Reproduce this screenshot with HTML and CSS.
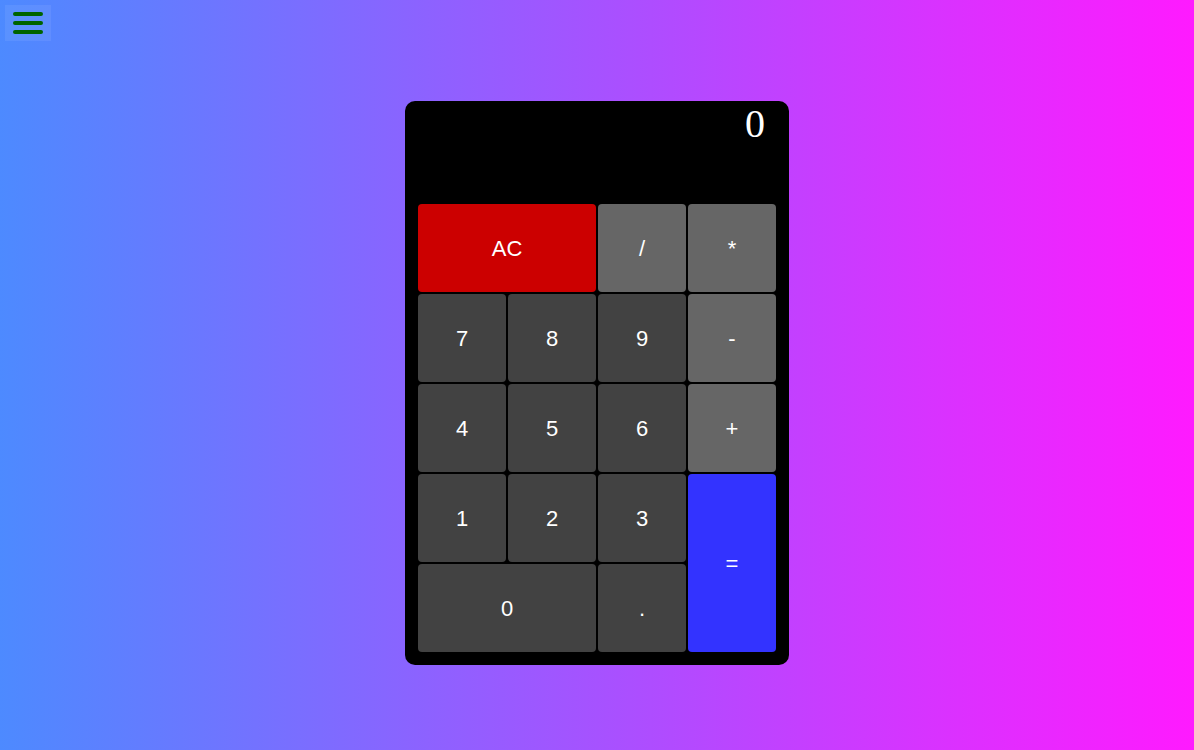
FILE: index.html
```html
<!DOCTYPE html>
<html>
<head>
<meta charset="utf-8">
<link rel="stylesheet" href="styles.css">
</head>
<body>
<button class="menu" aria-label="menu">
  <span class="bar"></span><span class="bar"></span><span class="bar"></span>
</button>
<main class="stage">
  <div class="calc">
    <div class="display"><span class="value">0</span></div>
    <div class="keys">
      <button class="key clear wide">AC</button>
      <button class="key op">/</button>
      <button class="key op">*</button>
      <button class="key">7</button>
      <button class="key">8</button>
      <button class="key">9</button>
      <button class="key op">-</button>
      <button class="key">4</button>
      <button class="key">5</button>
      <button class="key">6</button>
      <button class="key op">+</button>
      <button class="key">1</button>
      <button class="key">2</button>
      <button class="key">3</button>
      <button class="key equals">=</button>
      <button class="key wide">0</button>
      <button class="key">.</button>
    </div>
  </div>
</main>
</body>
</html>
```

FILE: styles.css
```css
* { box-sizing: border-box; }
html, body { height: 100%; }
body {
  margin: 0;
  min-height: 750px;
  background: linear-gradient(to right, #4d8aff, #ff1aff);
  font-family: "Liberation Sans", Arial, sans-serif;
}
.menu {
  position: absolute;
  left: 5px;
  top: 5px;
  width: 46px;
  height: 36px;
  border: none;
  padding: 7px 8px;
  background: rgba(255, 255, 255, 0.07);
  display: flex;
  flex-direction: column;
  justify-content: space-between;
  cursor: pointer;
}
.bar {
  display: block;
  height: 4px;
  width: 30px;
  border-radius: 2px;
  background: #006400;
}
.stage {
  display: flex;
  justify-content: center;
  padding-top: 101px;
}
.calc {
  width: 384px;
  background: #000;
  border-radius: 10px;
  padding: 0 13px 13px 13px;
}
.display {
  height: 103px;
  display: flex;
  justify-content: flex-end;
  align-items: flex-start;
  padding-right: 11px;
}
.value {
  color: #fff;
  font-family: "Liberation Serif", "Times New Roman", serif;
  font-size: 40px;
  line-height: 46px;
}
.keys {
  display: grid;
  grid-template-columns: repeat(4, 88px);
  grid-auto-rows: 88px;
  gap: 2px;
}
.key {
  border: none;
  border-radius: 4px;
  background: #424242;
  color: #fff;
  font-family: "Liberation Sans", Arial, sans-serif;
  font-size: 22px;
  padding: 2px 0 0 0;
  cursor: pointer;
}
.key.op { background: #666666; }
.key.clear { background: #cc0000; }
.key.wide { grid-column: span 2; }
.key.equals { background: #3333ff; grid-row: span 2; }
```
